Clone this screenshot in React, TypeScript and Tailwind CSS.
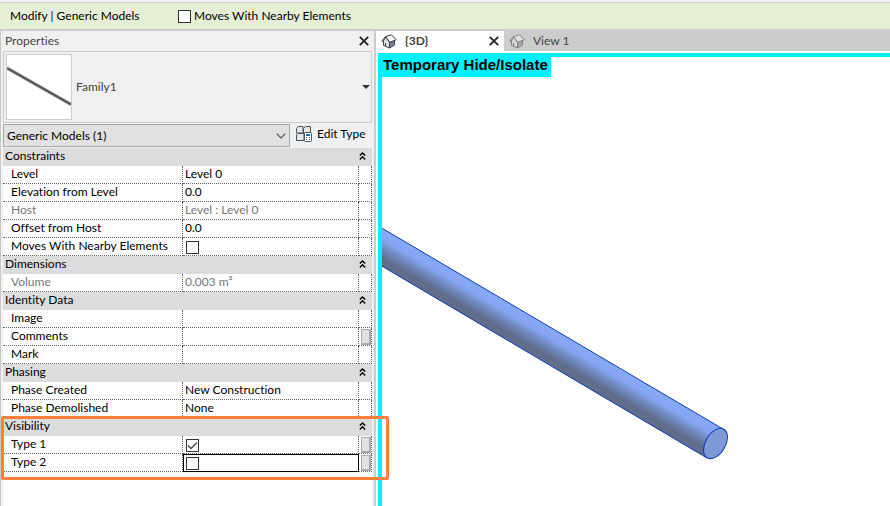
import { ReactNode } from "react";

type Row = {
  label: string;
  value?: ReactNode;
  checked?: boolean;
  disabled?: boolean;
  picker?: boolean;
  active?: boolean;
};

type Group = {
  name: string;
  rows: Row[];
};

const groups: Group[] = [
  {
    name: "Constraints",
    rows: [
      { label: "Level", value: "Level 0" },
      { label: "Elevation from Level", value: "0.0" },
      { label: "Host", value: "Level : Level 0", disabled: true },
      { label: "Offset from Host", value: "0.0" },
      { label: "Moves With Nearby Elements", checked: false },
    ],
  },
  {
    name: "Dimensions",
    rows: [{ label: "Volume", value: "0.003 m³", disabled: true }],
  },
  {
    name: "Identity Data",
    rows: [
      { label: "Image" },
      { label: "Comments", picker: true },
      { label: "Mark" },
    ],
  },
  {
    name: "Phasing",
    rows: [
      { label: "Phase Created", value: "New Construction" },
      { label: "Phase Demolished", value: "None" },
    ],
  },
  {
    name: "Visibility",
    rows: [
      { label: "Type 1", checked: true, picker: true },
      { label: "Type 2", checked: false, picker: true, active: true },
    ],
  },
];

const CloseIcon = () => (
  <svg width="10" height="10" viewBox="0 0 10 10" stroke="#222" strokeWidth="1.8" aria-hidden="true">
    <path d="M0.8 0.8 9.2 9.2M9.2 0.8 0.8 9.2" />
  </svg>
);

const HouseIcon = ({ muted }: { muted?: boolean }) => (
  <svg
    width="16"
    height="15"
    viewBox="0 0 16 15"
    stroke={muted ? "#808080" : "#3a424e"}
    strokeLinejoin="round"
    aria-hidden="true"
  >
    <path d="M2.5 6.5 5 3l3.5 5.5v5.5l-6-2.5z" fill={muted ? "#d4d4d4" : "#dfe3e8"} />
    <path d="M8.5 8.5v5.5l5-3V6z" fill={muted ? "#a5a5a5" : "#77818f"} />
    <path d="M4.5 2.5 10.5.8l4.7 5L8.7 8.2z" fill={muted ? "#e2e2e2" : "#fafafa"} />
    <path d="M4.5 2.5.8 7.2l1.7-.4" fill="none" />
    <path d="M4.5 9v3" />
  </svg>
);

const EditTypeIcon = () => (
  <svg
    width="16"
    height="16"
    viewBox="0 0 16 16"
    fill="#e6e8eb"
    stroke="#4a515d"
    strokeLinejoin="round"
    aria-hidden="true"
  >
    <path d="M.5 2.5l2-2h4.5v6.5H.5z" />
    <path d="M7.5 2.5l2-2H14.5v6.5h-7z" />
    <path d="M.5 9l1.5-1.5h6v7H.5z" />
    <rect x="8.5" y="6.5" width="7" height="9" rx="1" fill="#fff" />
    <path d="M10 9h4" stroke="#1f66b0" strokeWidth="2" />
    <path d="M10 11.5h1M13 11.5h1M10 13.5h1M13 13.5h1" />
  </svg>
);

const CollapseIcon = () => (
  <svg width="7" height="8" viewBox="0 0 7 8" fill="none" stroke="#000" strokeWidth="1.4" aria-hidden="true">
    <path d="M.8 3.6 3.5 1l2.7 2.6M.8 7.4 3.5 4.8l2.7 2.6" />
  </svg>
);

type CheckBoxProps = {
  id: string;
  checked?: boolean;
};

const CheckBox: React.FC<CheckBoxProps> = ({ id, checked }) => (
  <span className="grid size-[13px] shrink-0">
    <input
      id={id}
      type="checkbox"
      defaultChecked={checked}
      className="peer col-start-1 row-start-1 size-[13px] appearance-none border border-[#333] bg-white"
    />
    <svg
      viewBox="0 0 13 13"
      fill="none"
      stroke="#444"
      strokeWidth="1.3"
      className="pointer-events-none invisible col-start-1 row-start-1 size-[13px] peer-checked:visible"
      aria-hidden="true"
    >
      <path d="M2 6.5 5 9.5l6-6" />
    </svg>
  </span>
);

const PropertyRow: React.FC<{ row: Row }> = ({ row }) => {
  const id = row.label.toLowerCase().replaceAll(" ", "-");
  const isCheck = row.checked !== undefined;
  const color = row.disabled ? "text-[#777]" : "text-black";
  return (
    <tr className={`h-[18px] align-top ${color}`}>
      <th className="border-r border-b border-dotted border-[#666] p-0 pl-2 text-left font-normal">
        {isCheck ? <label htmlFor={id}>{row.label}</label> : row.label}
      </th>
      <td
        className={`border-r border-b border-dotted border-[#666] p-0 ${
          row.active ? "outline -outline-offset-1 outline-black" : ""
        }`}
      >
        <div className={`flex h-[17px] items-start ${isCheck ? "pt-[3px] pl-[3px]" : "pl-0.5"}`}>
          {isCheck ? <CheckBox id={id} checked={row.checked} /> : row.value}
        </div>
      </td>
      <td className="border-r border-b border-dotted border-[#666] p-0 pl-0.5">
        {row.picker && (
          <button
            aria-label={`Associate ${row.label}`}
            className="mt-px block h-4 w-2.5 border border-r-2 border-b-2 border-[#aaa] bg-[#e1e1e1]"
          />
        )}
      </td>
    </tr>
  );
};

const PropertyTable = () => (
  <div className="relative">
    <table className="w-full table-fixed border-separate border-spacing-0">
      <colgroup>
        <col className="w-[180px]" />
        <col />
        <col className="w-[13px]" />
      </colgroup>
      {groups.map((group) => (
        <tbody key={group.name}>
          <tr className="h-[18px] bg-[#dcdcdc]">
            <th colSpan={3} className="p-0 pr-1.5 pb-0.5 pl-0.5 text-left font-normal">
              <div className="flex items-center justify-between">
                {group.name}
                <button aria-label={`Collapse ${group.name}`}>
                  <CollapseIcon />
                </button>
              </div>
            </th>
          </tr>
          {group.rows.map((row) => (
            <PropertyRow key={row.label} row={row} />
          ))}
        </tbody>
      ))}
    </table>
    {/* callout around the Visibility group */}
    <div className="pointer-events-none absolute -right-[17px] -bottom-2 -left-0.5 z-10 h-16 rounded-xs border-3 border-[#ff7f3f]" />
  </div>
);

const PropertiesPanel = () => (
  <aside className="flex w-[374px] shrink-0 flex-col border-l border-[#c8c8c8] bg-[#f0f0f0] pr-0.5 pl-0.5">
    <div className="flex h-5 items-center justify-between pr-[3px] pl-0.5 text-[#444]">
      <h2>Properties</h2>
      <button aria-label="Close properties">
        <CloseIcon />
      </button>
    </div>
    <button className="flex h-18 items-center border border-[#ccc] pr-px pl-0.5 text-left text-[#444]">
      <svg width="66" height="66" viewBox="0 0 66 66" className="border border-[#ccc] bg-white" aria-hidden="true">
        <path d="M0 13.5 66 51" stroke="#aaa" strokeWidth="3.5" />
        <path d="M0 13.5 66 51" stroke="#555" strokeWidth="2" />
      </svg>
      <span className="ml-1 grow">Family1</span>
      <svg width="8" height="4" viewBox="0 0 8 4" aria-hidden="true">
        <path d="M0 0h8L4 4z" fill="#333" />
      </svg>
    </button>
    <div className="flex py-px">
      <div className="grid grow">
        <select
          aria-label="Element filter"
          className="col-start-1 row-start-1 h-[23px] appearance-none border border-[#aaa] bg-[#e1e1e1] px-[3px] text-black"
        >
          <option>Generic Models (1)</option>
        </select>
        <svg
          width="10"
          height="6"
          viewBox="0 0 10 6"
          fill="none"
          stroke="#555"
          strokeWidth="1.2"
          className="pointer-events-none col-start-1 row-start-1 mr-1 self-center justify-self-end"
          aria-hidden="true"
        >
          <path d="M.7.7 5 5 9.3.7" />
        </svg>
      </div>
      <button className="flex h-5 w-[82px] items-center gap-[5px] pl-1.5 whitespace-nowrap text-black">
        <EditTypeIcon />
        Edit Type
      </button>
    </div>
    <div className="grow bg-white">
      <PropertyTable />
    </div>
  </aside>
);

const ModelCanvas = () => (
  <svg width="508" height="449" viewBox="382 57 508 449" className="col-start-1 row-start-1" role="img" aria-label="Cylinder">
    <defs>
      <linearGradient id="shade" gradientUnits="userSpaceOnUse" x1="552" y1="328" x2="535.5" y2="356">
        <stop offset="0" stopColor="#88a9f8" />
        <stop offset="0.3" stopColor="#85a5f2" />
        <stop offset="0.55" stopColor="#6f86bb" />
        <stop offset="0.8" stopColor="#5f6d8c" />
        <stop offset="1" stopColor="#616e8a" />
      </linearGradient>
    </defs>
    <path d="M380 227 723 429 707 458 380 265z" fill="url(#shade)" stroke="#0c3cb4" />
    <ellipse cx="715.5" cy="443.5" rx="10" ry="16.5" transform="rotate(30.5 715.5 443.5)" fill="#7f98d6" stroke="#0c3cb4" />
  </svg>
);

const Viewer = () => (
  <main className="flex min-w-0 grow flex-col border-l-2 border-[#ccc] bg-white">
    <nav className="flex h-5 bg-[#ccc] text-[#444]">
      <div className="flex w-32 items-center bg-white pr-[5px] pl-[5px]">
        <HouseIcon />
        <a href="#3d" className="ml-2 grow font-bold">
          {"{3D}"}
        </a>
        <button aria-label="Close {3D}">
          <CloseIcon />
        </button>
      </div>
      <div className="flex items-center pl-[5px]">
        <HouseIcon muted />
        <a href="#view-1" className="ml-2">
          View 1
        </a>
      </div>
    </nav>
    <div className="mt-0.5 ml-0.5 grid grow grid-cols-1 overflow-hidden border-t-4 border-l-4 border-[#00f0ff]">
      <ModelCanvas />
      <div className="z-1 col-start-1 row-start-1 h-5 self-start justify-self-start bg-[#00f0ff] pr-[3px] pl-px font-['Liberation_Sans',sans-serif] text-[15px] leading-4 font-bold text-black">
        Temporary Hide/Isolate
      </div>
    </div>
  </main>
);

export default function App() {
  return (
    <div className="flex min-h-screen flex-col bg-[#f0f0f0] font-['Lato',sans-serif] text-xs leading-4 [font-variant-ligatures:none]">
      <header className="mt-0.5 flex h-[29px] items-center border-t border-b-2 border-[#ccc] bg-[#e4efd6] pl-2.5 text-black">
        <span className="w-[168px]">Modify | Generic Models</span>
        <CheckBox id="moves-nearby" />
        <label htmlFor="moves-nearby" className="ml-[3px]">
          Moves With Nearby Elements
        </label>
      </header>
      <div className="flex grow">
        <PropertiesPanel />
        <Viewer />
      </div>
    </div>
  );
}
